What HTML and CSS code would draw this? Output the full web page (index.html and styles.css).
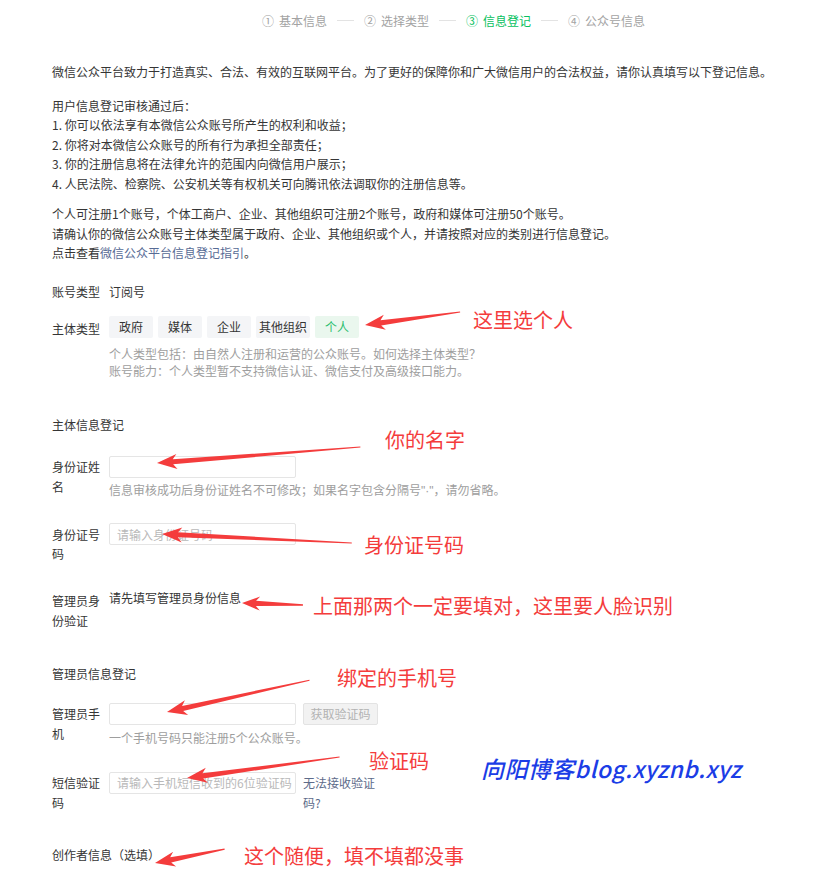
FILE: index.html
```html
<!DOCTYPE html>
<html lang="zh-CN">
<head>
<meta charset="utf-8">
<title>信息登记</title>
<link rel="stylesheet" href="styles.css">
</head>
<body>
<div class="page">
  <div class="steps">
    <span class="step"><span class="num">①</span>基本信息</span><span class="sep"></span>
    <span class="step"><span class="num">②</span>选择类型</span><span class="sep"></span>
    <span class="step active"><span class="num">③</span>信息登记</span><span class="sep"></span>
    <span class="step"><span class="num">④</span>公众号信息</span>
  </div>

  <p class="intro p1">微信公众平台致力于打造真实、合法、有效的互联网平台。为了更好的保障你和广大微信用户的合法权益，请你认真填写以下登记信息。</p>
  <p class="intro p2">用户信息登记审核通过后：<br>1. 你可以依法享有本微信公众账号所产生的权利和收益；<br>2. 你将对本微信公众账号的所有行为承担全部责任；<br>3. 你的注册信息将在法律允许的范围内向微信用户展示；<br>4. 人民法院、检察院、公安机关等有权机关可向腾讯依法调取你的注册信息等。</p>
  <p class="intro p3">个人可注册1个账号，个体工商户、企业、其他组织可注册2个账号，政府和媒体可注册50个账号。<br>请确认你的微信公众账号主体类型属于政府、企业、其他组织或个人，并请按照对应的类别进行信息登记。<br>点击查看<a class="link">微信公众平台信息登记指引</a>。</p>

  <div class="row row-type">
    <div class="label">账号类型</div>
    <div class="content">订阅号</div>
  </div>

  <div class="row row-subject">
    <div class="label">主体类型</div>
    <div class="content">
      <div class="types">
        <span class="type">政府</span>
        <span class="type">媒体</span>
        <span class="type">企业</span>
        <span class="type">其他组织</span>
        <span class="type selected">个人</span>
      </div>
      <p class="hint hint-subject">个人类型包括：由自然人注册和运营的公众账号。如何选择主体类型？<br>账号能力：个人类型暂不支持微信认证、微信支付及高级接口能力。</p>
    </div>
  </div>

  <div class="section sec-subject">主体信息登记</div>

  <div class="row row-name">
    <div class="label">身份证姓名</div>
    <div class="content">
      <input class="input" type="text">
      <p class="hint hint-field">信息审核成功后身份证姓名不可修改；如果名字包含分隔号<span class="latin">"·"</span>，请勿省略。</p>
    </div>
  </div>

  <div class="row row-id">
    <div class="label">身份证号码</div>
    <div class="content">
      <input class="input" type="text" placeholder="请输入身份证号码">
    </div>
  </div>

  <div class="row row-verify">
    <div class="label">管理员身份验证</div>
    <div class="content verify-text">请先填写管理员身份信息</div>
  </div>

  <div class="section sec-admin">管理员信息登记</div>

  <div class="row row-phone">
    <div class="label">管理员手机</div>
    <div class="content">
      <div class="field-line">
        <input class="input" type="text">
        <span class="code-btn">获取验证码</span>
      </div>
      <p class="hint hint-field hint-phone">一个手机号码只能注册5个公众账号。</p>
    </div>
  </div>

  <div class="row row-sms">
    <div class="label">短信验证码</div>
    <div class="content">
      <div class="field-line">
        <input class="input input-sms" type="text" placeholder="请输入手机短信收到的6位验证码">
        <span class="sms-link">无法接收验证码?</span>
      </div>
    </div>
  </div>

  <div class="section sec-creator">创作者信息（选填）</div>
</div>

<div class="annotations">
  <svg class="arrows" width="822" height="880" viewBox="0 0 822 880" xmlns="http://www.w3.org/2000/svg">
    <g fill="#f43c3c">
      <polygon points="0,0 20,-7.5 16,-2.6 96,-0.5 96,0.5 16,2.6 20,7.5" transform="translate(365 325) rotate(-7.8)"/>
      <polygon points="0,0 20,-7.5 16,-2.6 204,-0.5 204,0.5 16,2.6 20,7.5" transform="translate(157 463) rotate(-4.5)"/>
      <polygon points="0,0 20,-7.5 16,-2.6 190,-0.5 190,0.5 16,2.6 20,7.5" transform="translate(162 534) rotate(2.7)"/>
      <polygon points="0,0 18,-7 14,-2.6 61,-0.8 61,0.8 14,2.6 18,7" transform="translate(242 603) rotate(1.9)"/>
      <polygon points="0,0 20,-7.5 16,-2.6 146,-0.5 146,0.5 16,2.6 20,7.5" transform="translate(167 712) rotate(-12.6)"/>
      <polygon points="0,0 20,-7.5 16,-2.6 154,-0.5 154,0.5 16,2.6 20,7.5" transform="translate(187 778) rotate(-7.8)"/>
      <polygon points="0,0 20,-7.5 16,-2.6 71,-0.6 71,0.6 16,2.6 20,7.5" transform="translate(155 863) rotate(-11.3)"/>
    </g>
  </svg>
  <span class="note note-1">这里选个人</span>
  <span class="note note-2">你的名字</span>
  <span class="note note-3">身份证号码</span>
  <span class="note note-4">上面那两个一定要填对，这里要人脸识别</span>
  <span class="note note-5">绑定的手机号</span>
  <span class="note note-6">验证码</span>
  <span class="note note-7">这个随便，填不填都没事</span>
  <span class="watermark">向阳博客blog.xyznb.xyz</span>
</div>
</body>
</html>
```

FILE: styles.css
```css
* {
  box-sizing: border-box;
}

html, body {
  margin: 0;
  padding: 0;
  background: #ffffff;
}

body {
  position: relative;
  width: 822px;
  height: 880px;
  overflow: hidden;
  font-family: "Noto Sans CJK SC", "Noto Sans", sans-serif;
  font-size: 12px;
  color: #353535;
}

.page {
  padding-left: 52px;
}

p {
  margin: 0;
}

/* steps */
.steps {
  display: flex;
  align-items: center;
  height: 40px;
  padding-left: 210px;
  color: #a3a3a3;
  font-size: 12px;
  white-space: nowrap;
}

.step .num {
  margin-right: 5px;
}

.step.active {
  color: #07c160;
}

.sep {
  width: 17px;
  height: 1px;
  background: #e3e3e3;
  margin: 0 10px;
}

/* intro */
.intro {
  line-height: 19.5px;
  color: #353535;
}

.p1 {
  margin-top: 22px;
}

.p2 {
  margin-top: 14px;
}

.p3 {
  margin-top: 11px;
}

.link {
  color: #576b95;
  text-decoration: none;
}

/* rows */
.row {
  display: flex;
  align-items: flex-start;
}

.label {
  width: 50px;
  margin-right: 7px;
  line-height: 19.5px;
  flex-shrink: 0;
}

.content {
  line-height: 19.5px;
}

.row-type {
  margin-top: 19.5px;
}

.row-subject {
  margin-top: 14px;
}

.row-subject .label {
  padding-top: 3px;
}

.types {
  display: flex;
  gap: 5px;
}

.type {
  min-width: 44px;
  height: 22px;
  padding: 0 3px;
  line-height: 22px;
  text-align: center;
  background: #f4f5f7;
  border-radius: 2px;
  color: #353535;
}

.type.selected {
  background: #eaf7ee;
  color: #2bbd6e;
}

.hint {
  color: #9e9e9e;
  line-height: 17.5px;
  white-space: nowrap;
}

.latin {
  font-family: "Liberation Sans", sans-serif;
}

.hint-subject {
  margin-top: 7px;
}

.section {
  line-height: 19.5px;
}

.sec-subject {
  margin-top: 35px;
}

.row-name {
  margin-top: 21.5px;
}

.row-name .label,
.row-id .label,
.row-phone .label,
.row-sms .label {
  padding-top: 1.5px;
}

.input {
  display: block;
  width: 187px;
  height: 22px;
  margin: 0;
  padding: 0 2px 0 7px;
  border: 1px solid #e5e5e5;
  border-radius: 2px;
  background: #ffffff;
  font-family: "Noto Sans CJK SC", "Noto Sans", sans-serif;
  font-size: 12px;
  color: #353535;
  outline: none;
}

.input::placeholder {
  color: #b9b9b9;
}

.hint-field {
  margin-top: 3px;
}

.row-id {
  margin-top: 23px;
}

.row-verify {
  margin-top: 27.75px;
}

.verify-text {
  line-height: 14px;
}

.sec-admin {
  margin-top: 34px;
}

.row-phone {
  margin-top: 19px;
}

.field-line {
  display: flex;
  align-items: flex-start;
  gap: 7px;
}

.code-btn {
  width: 75px;
  height: 22px;
  line-height: 20px;
  text-align: center;
  background: #f2f2f2;
  border: 1px solid #e3e3e3;
  border-radius: 2px;
  color: #b3b3b3;
}

.hint-phone {
  margin-top: 4px;
}

.row-sms {
  margin-top: 25.5px;
}

.sms-link {
  width: 76px;
  padding-top: 1.5px;
  line-height: 19.5px;
  color: #5d6b8a;
}

.sec-creator {
  margin-top: 32.75px;
}

/* annotations overlay */
.annotations {
  position: absolute;
  left: 0;
  top: 0;
  width: 822px;
  height: 880px;
  pointer-events: none;
}

.arrows {
  position: absolute;
  left: 0;
  top: 0;
}

.note {
  position: absolute;
  font-family: "Noto Sans CJK SC", "Noto Sans", sans-serif;
  font-size: 20px;
  line-height: 24px;
  color: #f43c3c;
  white-space: nowrap;
}

.note-1 { left: 473px; top: 308px; }
.note-2 { left: 385px; top: 428px; }
.note-3 { left: 364px; top: 533px; }
.note-4 { left: 313px; top: 594px; }
.note-5 { left: 337px; top: 666px; }
.note-6 { left: 369px; top: 749px; }
.note-7 { left: 244px; top: 844px; }

.watermark {
  position: absolute;
  left: 481px;
  top: 753px;
  font-family: "Noto Sans CJK SC", "Noto Sans", sans-serif;
  font-size: 23px;
  line-height: 30px;
  letter-spacing: 0.4px;
  font-style: italic;
  font-weight: 500;
  color: #1b3de6;
  white-space: nowrap;
}
```
